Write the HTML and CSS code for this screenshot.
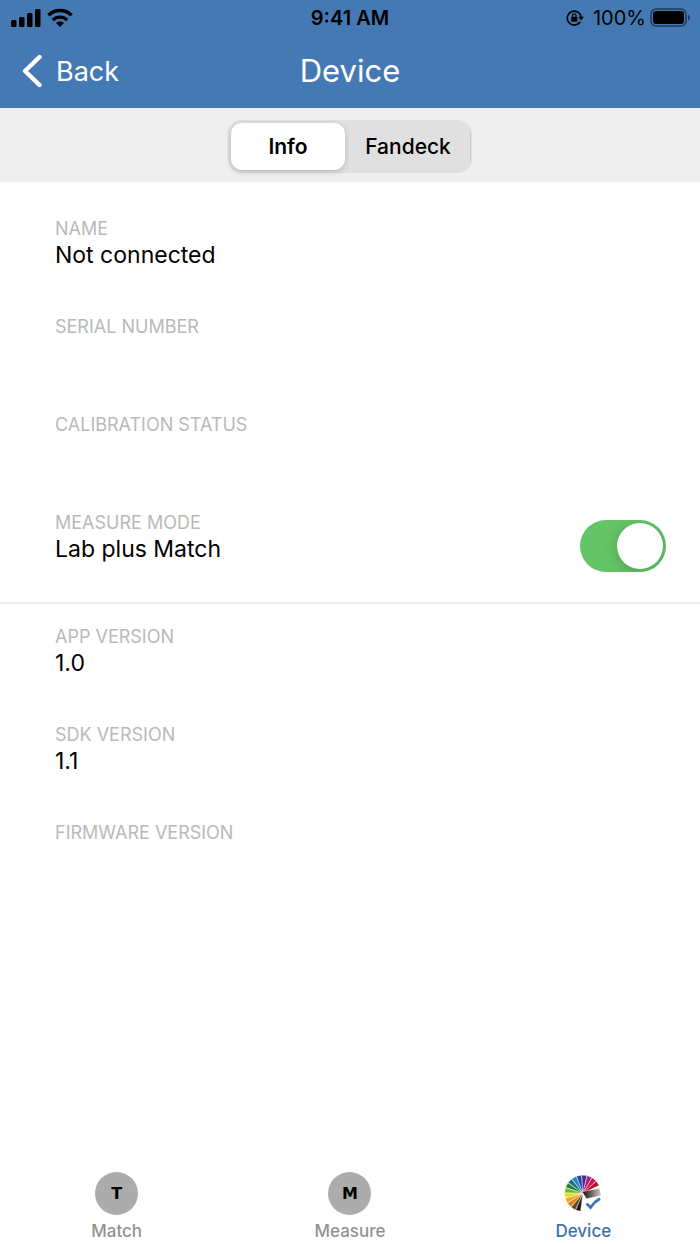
FILE: index.html
```html
<!DOCTYPE html>
<html lang="en">
<head>
  <meta charset="UTF-8">
  <meta name="viewport" content="width=device-width, initial-scale=1.0">
  <title>Device</title>
  <link rel="stylesheet" href="styles.css">
</head>
<body>
  <header>
    <!-- Status bar -->
    <div class="status">
      <div class="status-left">
        <svg width="31" height="20" viewBox="0 0 31 20" aria-hidden="true">
          <rect x="1" y="12" width="5.5" height="7" rx="1.5"/>
          <rect x="9" y="9" width="5.5" height="10" rx="1.5"/>
          <rect x="17" y="5" width="5.5" height="14" rx="1.5"/>
          <rect x="25" y="1" width="5.5" height="18" rx="1.5"/>
        </svg>
        <svg width="26" height="20" viewBox="0 0 26 20" aria-hidden="true">
          <g fill="none" stroke="#000" stroke-width="3.4">
            <path d="M1.4 7.2a16.6 16.6 0 0 1 23.2 0"/>
            <path d="M5.8 12a10.4 10.4 0 0 1 14.4 0"/>
          </g>
          <path d="M13 18.9l-4-4a5.8 5.8 0 0 1 8 0z"/>
        </svg>
      </div>
      <span class="clock">9:41 AM</span>
      <div class="status-right">
        <svg width="18" height="18" viewBox="0 0 18 18" aria-hidden="true">
          <path d="M13.8 13.4A7 7 0 1 1 15.1 7.4" fill="none" stroke="#000" stroke-width="1.7" stroke-linecap="round"/>
          <path d="M12.3 7.7h5.6l-2.8 3.8z"/>
          <rect x="5.2" y="7.8" width="6.2" height="5" rx="0.8"/>
          <path d="M6.5 8.4V6.6a1.8 1.8 0 0 1 3.6 0v1.8" fill="none" stroke="#000" stroke-width="1.2"/>
        </svg>
        <span class="percent">100%</span>
        <svg width="40" height="20" viewBox="0 0 40 20" aria-hidden="true">
          <rect x="1" y="1" width="35" height="17" rx="5" fill="none" stroke="#000" stroke-opacity="0.5" stroke-width="1.6"/>
          <rect x="3" y="3" width="31" height="13" rx="3"/>
          <path d="M38 6.6c2.4 1 2.4 5 0 6z" fill-opacity="0.5"/>
        </svg>
      </div>
    </div>

    <!-- Navigation bar -->
    <nav class="navbar">
      <button class="back" type="button">
        <svg width="20" height="34" viewBox="0 0 20 34" aria-hidden="true">
          <path d="M17.5 3L3 17l14.5 14" fill="none" stroke="#fff" stroke-width="4.4" stroke-linecap="round" stroke-linejoin="round"/>
        </svg>
        Back
      </button>
      <h1>Device</h1>
    </nav>
  </header>

  <div class="segment-bar">
    <div class="segments">
      <button class="segment selected" type="button" aria-pressed="true">Info</button>
      <button class="segment" type="button" aria-pressed="false">Fandeck</button>
    </div>
  </div>

  <main>
    <section class="group">
      <div class="field">
        <h2>NAME</h2>
        <p>Not connected</p>
      </div>
      <div class="field">
        <h2>SERIAL NUMBER</h2>
      </div>
      <div class="field">
        <h2>CALIBRATION STATUS</h2>
      </div>
      <div class="mode">
        <label class="field" for="mode">
          <span class="name">MEASURE MODE</span>
          <span>Lab plus Match</span>
        </label>
        <input class="switch" type="checkbox" role="switch" id="mode" checked>
      </div>
    </section>

    <section class="group versions">
      <div class="field">
        <h2>APP VERSION</h2>
        <p>1.0</p>
      </div>
      <div class="field">
        <h2>SDK VERSION</h2>
        <p>1.1</p>
      </div>
      <div class="field">
        <h2>FIRMWARE VERSION</h2>
      </div>
    </section>
  </main>

  <!-- Tab bar -->
  <nav class="tabs">
    <a class="tab" href="#match">
      <span class="letter">T</span>
      Match
    </a>
    <a class="tab" href="#measure">
      <span class="letter">M</span>
      Measure
    </a>
    <a class="tab active" href="#device">
      <svg width="43" height="43" viewBox="0 0 43 43" aria-hidden="true">
        <defs>
          <linearGradient id="strip">
            <stop offset="0" stop-color="#1c1614"/>
            <stop offset="0.4" stop-color="#5d544c"/>
            <stop offset="1" stop-color="#d6cfc6"/>
          </linearGradient>
        </defs>
        <g transform="translate(20.8 21.3) rotate(3)" stroke="#fff" stroke-width="0.3">
          <path d="M0 0L-2.5 18L2.5 18z" fill="#1d1a17" transform="rotate(12)"/>
          <path d="M0 0L-2.5 18L2.5 18z" fill="#5e4a2a" transform="rotate(29)"/>
          <path d="M0 0L-2.5 18L2.5 18z" fill="#d9821c" transform="rotate(46)"/>
          <path d="M0 0L-2.5 18L2.5 18z" fill="#f2a81e" transform="rotate(63)"/>
          <path d="M0 0L-2.5 18L2.5 18z" fill="#e6dc28" transform="rotate(80)"/>
          <path d="M0 0L-2.5 18L2.5 18z" fill="#7fb52e" transform="rotate(97)"/>
          <path d="M0 0L-2.5 18L2.5 18z" fill="#1f8232" transform="rotate(114)"/>
          <path d="M0 0L-2.5 18L2.5 18z" fill="#1f6d70" transform="rotate(131)"/>
          <path d="M0 0L-2.5 18L2.5 18z" fill="#2382cc" transform="rotate(148)"/>
          <path d="M0 0L-2.5 18L2.5 18z" fill="#2146a4" transform="rotate(165)"/>
          <path d="M0 0L-2.5 18L2.5 18z" fill="#4b2888" transform="rotate(182)"/>
          <path d="M0 0L-2.5 18L2.5 18z" fill="#a81e84" transform="rotate(199)"/>
          <path d="M0 0L-2.5 18L2.5 18z" fill="#d41548" transform="rotate(216)"/>
          <path d="M0 0L-2.5 18L2.5 18z" fill="#b81225" transform="rotate(233)"/>
        </g>
        <path d="M20.5 20L37.5 16.500L39 23.500L24.5 26.500z" fill="url(#strip)"/>
        <path d="M24.500 31.500L28.500 35.500Q32 30 38 26.500" fill="none" stroke="#3b74bd" stroke-width="2.800"/>
      </svg>
      Device
    </a>
  </nav>
</body>
</html>
```

FILE: styles.css
```css
* {
  box-sizing: border-box;
}

body {
  margin: 0;
  min-height: 100vh;
  display: flex;
  flex-direction: column;
  background: #fff;
  color: #000;
  font-family: Inter, "Liberation Sans", sans-serif;
  font-size: 23px;
}

h1, h2, p {
  margin: 0;
  font-weight: 400;
}

button {
  border: none;
  padding: 0;
  background: none;
  color: inherit;
  font: inherit;
  cursor: pointer;
}

header {
  background: #4479b4;
}

/* Status bar */
.status {
  display: grid;
  grid-template-columns: 1fr auto 1fr;
  align-items: center;
  height: 36px;
  padding: 0 10px;
  font-size: 20px;
}

.status-left, .status-right {
  display: flex;
  align-items: center;
  gap: 6px;
}

.status-right {
  justify-content: flex-end;
  gap: 4px;
}

.percent {
  padding-left: 5px;
}

.clock {
  font-weight: 600;
}

/* Navigation bar */
.navbar {
  display: grid;
  grid-template-columns: 1fr auto 1fr;
  align-items: center;
  height: 72px;
  padding: 0 22px 4px;
  color: #fff;
}

.back {
  display: flex;
  align-items: center;
  gap: 14px;
  padding-top: 2px;
  font-size: 27px;
}

.navbar h1 {
  font-size: 31px;
}

/* Segmented control */
.segment-bar {
  display: flex;
  justify-content: center;
  padding: 12px 12px 9px;
  background: #efefef;
}

.segments {
  display: flex;
  padding: 3px 1px 3px 3px;
  border-radius: 14px;
  background: #e0e0e0;
}

.segment {
  width: 126px;
  height: 47px;
  background: linear-gradient(#cacaca, #cacaca) right center / 1px 30px no-repeat;
  font-size: 21px;
  font-weight: 500;
}

.segment.selected {
  width: 114px;
  border-radius: 11px;
  background: #fff;
  font-weight: 600;
  box-shadow: 0 2px 6px rgba(0, 0, 0, 0.18);
}

/* Device details */
main {
  flex: 1;
}

.group {
  display: flex;
  flex-direction: column;
  gap: 46px;
  padding: 34px 34px 30px 55px;
}

.versions {
  padding-top: 20px;
  border-top: 2px solid #ededed;
}

.field {
  display: flex;
  flex-direction: column;
  min-height: 52px;
  line-height: 26px;
}

.field h2, .field .name {
  color: #b9b9b9;
  font-size: 18px;
}

.mode {
  display: flex;
  justify-content: space-between;
}

.switch {
  appearance: none;
  display: flex;
  justify-content: flex-end;
  width: 86px;
  height: 52px;
  margin: 10px 0 0;
  padding: 3px;
  border-radius: 26px;
  background: #65c466;
  overflow: hidden;
  cursor: pointer;
}

.switch::before {
  content: "";
  width: 46px;
  height: 46px;
  border-radius: 50%;
  background: #fff;
  box-shadow: 0 3px 14px rgba(0, 0, 0, 0.2);
}

.switch:not(:checked) {
  justify-content: flex-start;
  background: #e0e0e0;
}

/* Tab bar */
.tabs {
  display: flex;
  padding-bottom: 3px;
}

.tab {
  flex: 1;
  display: flex;
  flex-direction: column;
  align-items: center;
  gap: 6px;
  color: #929292;
  font-size: 17px;
  font-weight: 500;
  line-height: 20px;
  text-decoration: none;
}

.tab.active {
  color: #3b71b0;
}

.letter {
  width: 43px;
  height: 43px;
  border-radius: 50%;
  background: #acacac;
  color: #000;
  font-family: "DejaVu Sans", sans-serif;
  font-size: 16px;
  font-weight: 700;
  line-height: 43px;
  text-align: center;
}
```
